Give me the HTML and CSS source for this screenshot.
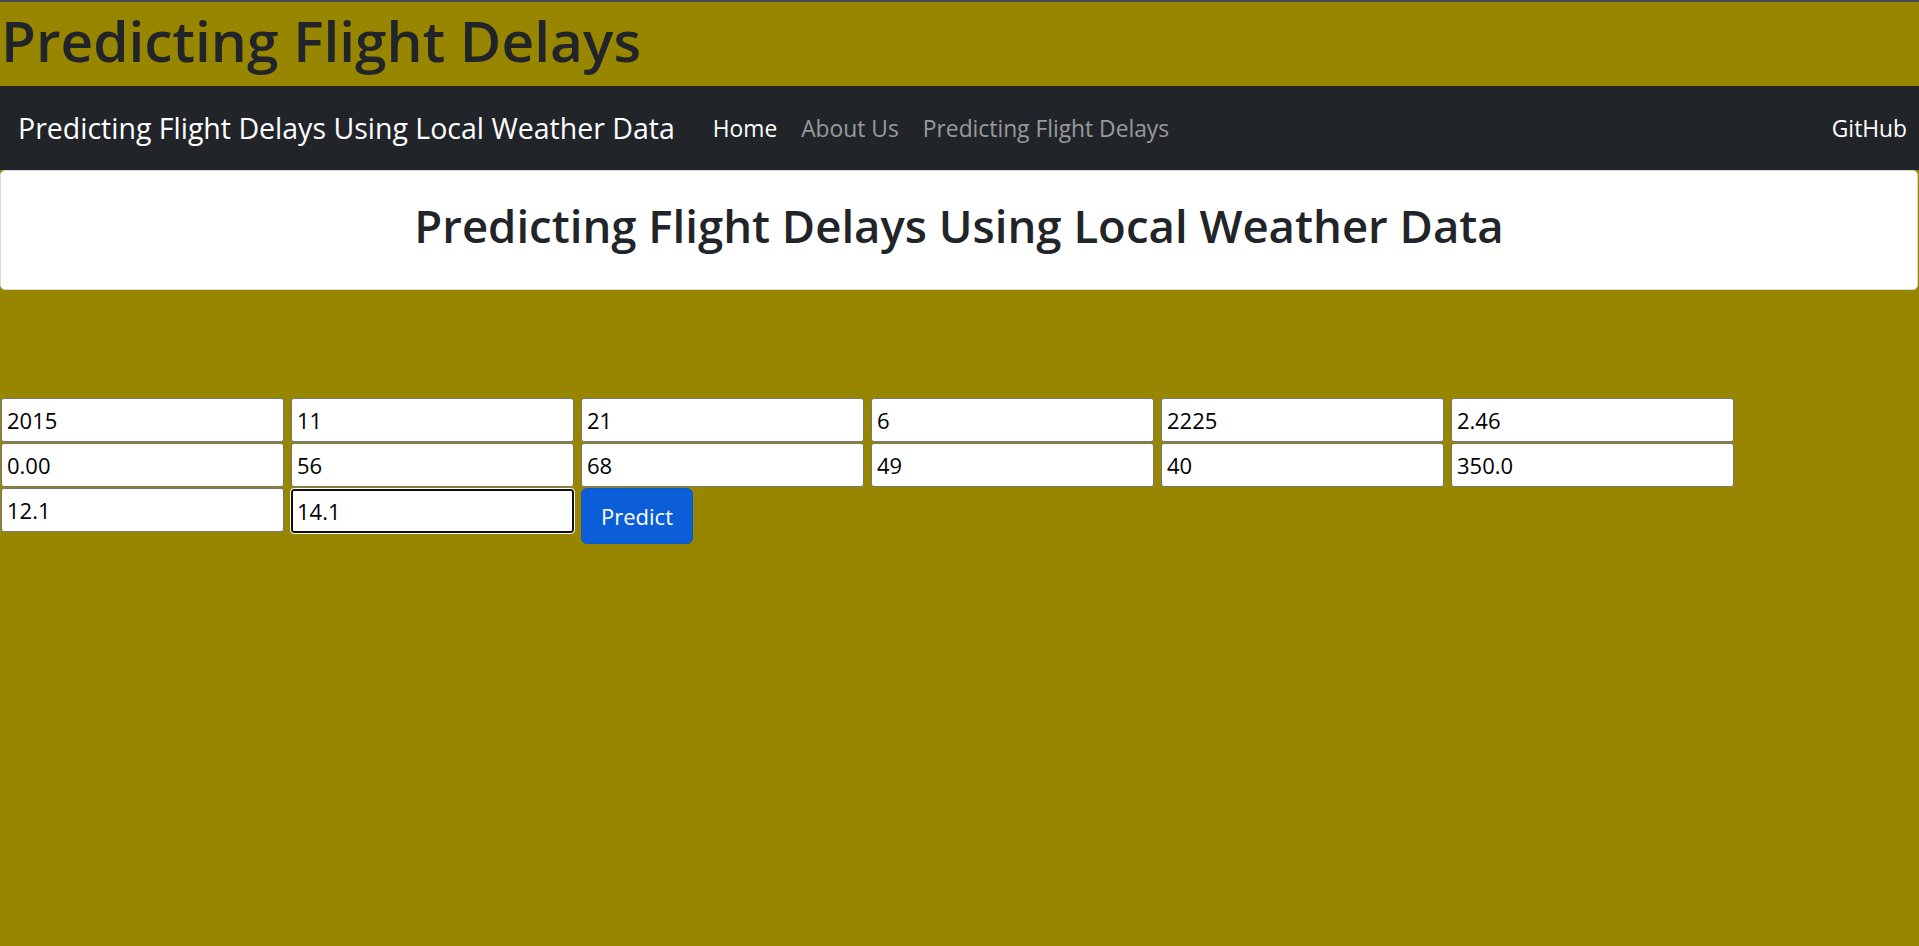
FILE: index.html
```html
<!DOCTYPE html>
<html lang="en">
<head>
<meta charset="utf-8">
<title>Predicting Flight Delays</title>
<link rel="stylesheet" href="styles.css">
</head>
<body>
<header class="site-header">
  <h1 class="site-title">Predicting Flight Delays</h1>
</header>
<nav class="navbar">
  <a class="brand" href="#">Predicting Flight Delays Using Local Weather Data</a>
  <ul class="nav-links">
    <li><a class="nav-link active" href="#">Home</a></li>
    <li><a class="nav-link" href="#">About Us</a></li>
    <li><a class="nav-link" href="#">Predicting Flight Delays</a></li>
  </ul>
  <a class="nav-link github" href="#">GitHub</a>
</nav>
<section class="card">
  <h1 class="card-title">Predicting Flight Delays Using Local Weather Data</h1>
</section>
<form class="predict-form">
  <input class="field" type="text" value="2015">
  <input class="field" type="text" value="11">
  <input class="field" type="text" value="21">
  <input class="field" type="text" value="6">
  <input class="field" type="text" value="2225">
  <input class="field" type="text" value="2.46">
  <input class="field" type="text" value="0.00">
  <input class="field" type="text" value="56">
  <input class="field" type="text" value="68">
  <input class="field" type="text" value="49">
  <input class="field" type="text" value="40">
  <input class="field" type="text" value="350.0">
  <input class="field" type="text" value="12.1">
  <input class="field focused" type="text" value="14.1">
  <button class="btn-predict" type="button">Predict</button>
</form>
</body>
</html>
```
FILE: styles.css
```css
* { box-sizing: border-box; }
html, body { margin: 0; padding: 0; }
body {
  background: #998600;
  border-top: 2px solid #4b4655;
  font-family: "Open Sans", "Noto Sans", sans-serif;
  color: #212529;
  min-height: 946px;
}
.site-header {
  height: 84px;
}
.site-title {
  margin: 0;
  font-size: 56.8px;
  font-weight: 600;
  line-height: 76px;
  padding-left: 1px;
  color: #212529;
}
.navbar {
  height: 84px;
  background: #212529;
  display: flex;
  align-items: center;
  padding: 0 12px 0 18px;
}
.brand {
  color: #fff;
  text-decoration: none;
  font-size: 28.5px;
  margin-right: 38px;
}
.nav-links {
  list-style: none;
  margin: 0;
  padding: 0;
  display: flex;
  gap: 24px;
  flex: 1;
}
.nav-link {
  color: rgba(255,255,255,0.55);
  text-decoration: none;
  font-size: 22.8px;
}
.nav-link.active, .nav-link.github {
  color: #fff;
}
.card {
  height: 120px;
  margin: 0 1px 0 0;
  background: #fff;
  border: 1px solid #d9d9d9;
  border-radius: 5px;
  text-align: center;
  padding-top: 24px;
}
.card-title {
  margin: 0;
  font-size: 45.5px;
  font-weight: 600;
  line-height: 60px;
}
.predict-form {
  margin-top: 108px;
  padding-left: 1px;
  display: flex;
  flex-wrap: wrap;
  column-gap: 7px;
  row-gap: 1px;
  align-items: flex-start;
}
.field {
  width: 283px;
  height: 44px;
  margin: 0;
  border: 1px solid #767676;
  border-radius: 3px;
  background: #fff;
  padding: 0 5px;
  font-family: "Open Sans", "Noto Sans", sans-serif;
  font-size: 22px;
  color: #000;
}
.field.focused {
  border: 2px solid #101010;
  outline: 1px solid #fff;
  padding-left: 4px;
  margin-top: 1px;
}
.btn-predict {
  width: 112px;
  height: 56px;
  background: #0b5ed7;
  border: 1px solid #0a58ca;
  border-radius: 6px;
  color: #fff;
  font-family: "Open Sans", "Noto Sans", sans-serif;
  font-size: 22px;
  padding: 0;
}
```
